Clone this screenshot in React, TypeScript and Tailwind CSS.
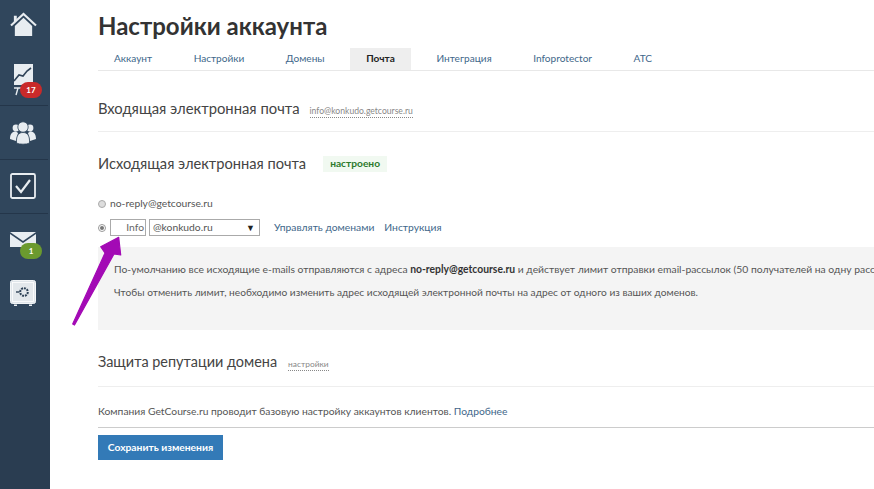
import React from "react";

const font = { fontFamily: 'Lato,"Open Sans","Noto Sans",sans-serif' };

function Sep() {
  return <div className="h-px bg-[#24364a] mr-[2px]" />;
}

function Badge({ color, top, children }: { color: string; top: string; children: React.ReactNode }) {
  return (
    <div className={`absolute left-[20px] ${top} w-[22px] h-[16px] rounded-[8px] ${color} text-white text-[8px] font-bold flex items-center justify-center leading-none`}>
      {children}
    </div>
  );
}

function Tab({ label, active }: { label: string; active?: boolean }) {
  return (
    <div className={`px-[16px] h-[22px] flex items-center text-[10.1px] ${active ? "bg-[#eeeeee] text-[#222] font-bold" : "text-[#41678a]"}`}>
      {label}
    </div>
  );
}

function Sidebar() {
  return (
    <div className="w-[50px] shrink-0 h-[489px] bg-[#2a3d51] flex flex-col">
      <div className="bg-[#30465c] h-[320px] flex flex-col">
        <div className="h-[52px] relative">
          <svg className="absolute left-[10px] top-[12px]" width="27" height="25" viewBox="0 0 28 26">
            <path d="M4 4h3v5l-3 3z" fill="#e8edf1" />
            <path d="M1 14 L14 2 L27 14" fill="none" stroke="#e8edf1" strokeWidth="2.2" />
            <path d="M5 14.5 L14 6 L23 14.5 V25 H5z" fill="#e8edf1" />
          </svg>
        </div>
        <div className="h-[53px] relative">
          <svg className="absolute left-[13px] top-[12px]" width="22" height="32" viewBox="0 0 22 32">
            <rect x="1" y="0" width="19" height="21" fill="#e8edf1" />
            <path d="M1 17 L6 11 L10 12 L14 7 L18 4" fill="none" stroke="#2f4358" strokeWidth="1.6" />
            <path d="M1 24 h9 M5 24 L3 31" stroke="#e8edf1" strokeWidth="1.4" fill="none" />
          </svg>
          <Badge color="bg-[#c92a2a]" top="top-[30px]">17</Badge>
        </div>
        <Sep />
        <div className="h-[53px] relative">
          <svg className="absolute left-[9px] top-[15px]" width="28" height="24" viewBox="0 0 28 24">
            <circle cx="7" cy="7" r="3.4" fill="#e8edf1" />
            <circle cx="21" cy="7" r="3.4" fill="#e8edf1" />
            <path d="M1 18 C1 12 4 10.5 7 10.5 L9 12 L7 20 Z M27 18 C27 12 24 10.5 21 10.5 L19 12 L21 20 Z" fill="#e8edf1" />
            <circle cx="14" cy="6" r="5.2" fill="#e8edf1" stroke="#30465c" strokeWidth="0.8" />
            <path d="M7.5 22 C7 14 10 11.5 14 11.5 C18 11.5 21 14 20.5 22 C18 23.6 10 23.6 7.5 22Z" fill="#e8edf1" stroke="#30465c" strokeWidth="0.8" />
          </svg>
        </div>
        <Sep />
        <div className="h-[53px] relative">
          <svg className="absolute left-[10px] top-[13px]" width="26" height="26" viewBox="0 0 26 26">
            <rect x="1" y="1" width="24" height="24" rx="1.5" fill="#2a3d51" stroke="#e8edf1" strokeWidth="1.8" />
            <path d="M6 13 L11 19 L20 7" fill="none" stroke="#e8edf1" strokeWidth="2.2" />
          </svg>
        </div>
        <Sep />
        <div className="flex-1 relative">
          <svg className="absolute left-[10px] top-[18px]" width="26" height="16" viewBox="0 0 26 16">
            <path d="M0 0 H26 L13 9z" fill="#e8edf1" />
            <path d="M0 2 L13 11 L26 2 V15 H0z" fill="#e8edf1" />
          </svg>
          <Badge color="bg-[#6b9a2e]" top="top-[29px]">1</Badge>
          <svg className="absolute left-[10px] top-[66px]" width="26" height="26" viewBox="0 0 26 26">
            <rect x="0.5" y="0.5" width="25" height="23" rx="2" fill="#dfe5ea" stroke="#f2f5f7" strokeWidth="1" />
            <rect x="2.5" y="2.5" width="21" height="19" fill="#e3e8ec" stroke="#fff" strokeWidth="0.8" />
            <path d="M4 24.5v1.5h3v-1.5M19 24.5v1.5h3v-1.5" fill="#e8edf1" />
            <circle cx="14" cy="12" r="3.8" fill="none" stroke="#2f4358" strokeWidth="2" strokeDasharray="2 0.9" />
            <path d="M6 12h3.5" stroke="#2f4358" strokeWidth="1.4" />
          </svg>
        </div>
      </div>
    </div>
  );
}

export default function App() {
  return (
    <div className="relative w-[874px] h-[489px] overflow-hidden bg-white flex" style={font}>
      <Sidebar />
      <main className="pl-[48px] w-[824px] shrink-0 text-[#444]">
        <h1 className="h-[48px] pt-[11px] text-[24px] leading-[30px] font-bold text-[#333]">Настройки аккаунта</h1>
        <div className="w-[776px] h-[23px] flex gap-[9.5px] border-b border-[#e8e8e8]">
          <Tab label="Аккаунт" />
          <Tab label="Настройки" />
          <Tab label="Домены" />
          <Tab label="Почта" active />
          <Tab label="Интеграция" />
          <Tab label="Infoprotector" />
          <Tab label="АТС" />
        </div>
        <div className="w-[776px] h-[61px] border-b border-[#eeeeee] flex items-baseline pt-[26px]">
          <span className="text-[14.8px] leading-[22px] text-[#444]">Входящая электронная почта</span>
          <span className="ml-[10px] text-[8.6px] text-[#888] border-b border-dotted border-[#888] leading-[11px]">info@konkudo.getcourse.ru</span>
        </div>
        <div className="flex items-center h-[22px] mt-[21px]">
          <span className="text-[14.65px] leading-[22px] text-[#444]">Исходящая электронная почта</span>
          <span className="ml-[17px] px-[7px] h-[16px] flex items-center bg-[#f1f9f1] text-[10.2px] font-bold text-[#2c7a2c]">настроено</span>
        </div>
        <div className="flex items-center h-[14px] mt-[22px] text-[10.3px] text-[#555]">
          <span className="w-[8px] h-[8px] rounded-full border border-[#aaa] bg-[#ddd] mr-[4px]" />
          no-reply@getcourse.ru
        </div>
        <div className="flex items-center h-[17px] mt-[8px] text-[10.3px]">
          <span className="w-[8px] h-[8px] rounded-full border border-[#999] bg-white flex items-center justify-center mr-[4px]">
            <span className="w-[4px] h-[4px] rounded-full bg-[#777]" />
          </span>
          <div className="w-[36px] h-[17px] border border-[#aaa] flex items-center justify-end pr-[1px] text-[#666]">Info</div>
          <div className="ml-[3px] w-[111px] h-[17px] border border-[#aaa] flex items-center justify-between pl-[3px] pr-[4px] text-[#555]">
            @konkudo.ru
            <span className="text-[#222] text-[9px]">▼</span>
          </div>
          <span className="ml-[14px] text-[#41678a]">Управлять доменами</span>
          <span className="ml-[10px] text-[#41678a]">Инструкция</span>
        </div>
        <div className="w-[776px] h-[83px] mt-[11px] bg-[#f4f4f4] pl-[16px] pt-[14px] text-[#555] overflow-hidden">
          <p className="h-[23px] text-[10.35px] leading-[16px] whitespace-nowrap">По-умолчанию все исходящие e-mails отправляются с адреса <b className="text-[#333]">no-reply@getcourse.ru</b> и действует лимит отправки email-рассылок (50 получателей на одну расс</p>
          <p className="text-[10.18px] leading-[16px]">Чтобы отменить лимит, необходимо изменить адрес исходящей электронной почты на адрес от одного из ваших доменов.</p>
        </div>
        <div className="w-[776px] h-[57px] border-b border-[#eeeeee] flex items-baseline pt-[21px]">
          <span className="text-[14.45px] leading-[22px] text-[#444]">Защита репутации домена</span>
          <span className="ml-[11px] text-[8.4px] text-[#888] border-b border-dotted border-[#888] leading-[11px]">настройки</span>
        </div>
        <div className="mt-[16px] h-[16px] leading-[16px] text-[10.3px] text-[#555]">
          Компания GetCourse.ru проводит базовую настройку аккаунтов клиентов. <span className="text-[#41678a]">Подробнее</span>
        </div>
        <div className="w-[776px] h-px mt-[8px] bg-[#cccccc]" />
        <div className="mt-[7px] w-[125px] h-[25px] bg-[#337ab7] text-white text-[10.3px] font-bold flex items-center justify-center">Сохранить изменения</div>
      </main>
      <svg className="absolute left-[68px] top-[232px]" width="60" height="95" viewBox="0 0 60 95">
        <path d="M4.7 92 L37 21 L32.7 14.7 L50.7 5.3 L52.7 23 L46 22 L6.5 93 Z" fill="#a30ab5" stroke="#a30ab5" strokeWidth="1.2" strokeLinejoin="round" />
      </svg>
    </div>
  );
}
